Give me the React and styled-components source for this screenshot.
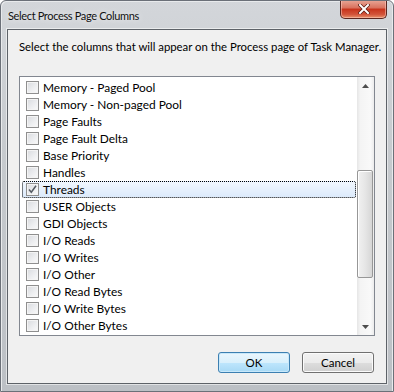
import React from "react";
import styled, { createGlobalStyle } from "styled-components";

const GlobalStyle = createGlobalStyle`
  body {
    margin: 0;
    font-family: Lato, "Noto Sans", sans-serif;
    font-size: 11px;
    color: #000;
  }
`;

const Window = styled.div`
  width: 394px;
  height: 392px;
  box-sizing: border-box;
  display: flex;
  flex-direction: column;
  padding: 0 6px 7px 6px;
  border-radius: 6px 6px 0 0;
  border: 1px solid #6b7078;
  background: linear-gradient(180deg, #d3d6da 0%, #c6cace 40%, #bcc0c5 100%);
  box-shadow: inset 1px 1px 0 #e8eaec, inset -1px 0 0 #e8eaec;
  overflow: hidden;
`;

const TitleBar = styled.div`
  height: 28px;
  display: flex;
  justify-content: space-between;
  align-items: flex-start;
`;

const Title = styled.span`
  margin-top: 8px;
  margin-left: 1px;
  font-size: 11px;
  letter-spacing: -0.35px;
  color: #111;
  text-shadow: 0 0 6px rgba(255, 255, 255, 0.9);
`;

const CloseButton = styled.div`
  width: 47px;
  height: 19px;
  margin-top: -1px;
  box-sizing: border-box;
  border: 1px solid #5b2720;
  border-top: none;
  border-radius: 0 0 5px 5px;
  background: linear-gradient(180deg, #e9a898 0%, #d8705c 45%, #c7321a 50%, #d2543a 80%, #e8926a 100%);
  box-shadow: inset 0 0 0 1px rgba(255, 210, 200, 0.5);
  display: flex;
  align-items: center;
  justify-content: center;
`;

const Client = styled.div`
  flex: 1;
  display: flex;
  flex-direction: column;
  background: #f0f0f0;
  border: 1px solid #5d6268;
  box-shadow: 0 0 0 1px rgba(255, 255, 255, 0.55);
  padding: 0 11px 0 11px;
`;

const Description = styled.div`
  margin-top: 9px;
  line-height: 16px;
  height: 16px;
  font-size: 11.35px;
  white-space: nowrap;
`;

const ListBox = styled.div`
  margin-top: 21px;
  height: 260px;
  box-sizing: border-box;
  border: 1px solid #828790;
  background: #fff;
  display: flex;
`;

const Rows = styled.div`
  flex: 1;
  padding: 2px 1px 0 2px;
  overflow: hidden;
`;

const Row = styled.div`
  height: 17px;
  box-sizing: border-box;
  display: flex;
  align-items: center;
  padding-left: 3px;
  border: 1px ${(p) => (p.$selected ? "dotted #000" : "solid transparent")};
  border-radius: ${(p) => (p.$selected ? "2px" : "0")};
  background: ${(p) =>
    p.$selected ? "linear-gradient(180deg, #f1f7fe 0%, #dceafb 100%)" : "transparent"};
`;

const Check = styled.span`
  width: 13px;
  height: 13px;
  box-sizing: border-box;
  border: 1px solid #8f8f8f;
  background: linear-gradient(135deg, #d8dade 0%, #eeeff1 60%, #fafafa 100%);
  box-shadow: inset 0 0 0 1px #f4f4f4;
  display: flex;
  align-items: center;
  justify-content: center;
  flex-shrink: 0;
`;

const Label = styled.span`
  margin-left: 4px;
  line-height: 15px;
  font-size: 11.9px;
  white-space: nowrap;
`;

const ScrollBar = styled.div`
  width: 17px;
  display: flex;
  flex-direction: column;
  background: linear-gradient(90deg, #e6e6e6 0%, #f4f4f4 20%, #f9f9f9 80%, #ececec 100%);
`;

const Arrow = styled.div`
  height: 17px;
  display: flex;
  align-items: center;
  justify-content: center;
`;

const Track = styled.div`
  flex: 1;
  display: flex;
  flex-direction: column;
  padding-top: ${(p) => p.$before}px;
`;

const Thumb = styled.div`
  height: ${(p) => p.$size}px;
  margin: 0 1px 0 0;
  box-sizing: border-box;
  border: 1px solid #979797;
  border-radius: 2px;
  background: linear-gradient(90deg, #f1f1f1 0%, #e6e6e6 50%, #d6d6d6 100%);
  box-shadow: inset 1px 1px 0 #fff;
`;

const Footer = styled.div`
  display: flex;
  justify-content: flex-end;
  gap: 12px;
  margin-top: 16px;
  padding-right: 1px;
`;

const Button = styled.div`
  width: 72px;
  height: 21px;
  box-sizing: border-box;
  border-radius: 3px;
  display: flex;
  align-items: center;
  justify-content: center;
  font-size: 11.5px;
  border: 1px solid ${(p) => (p.$default ? "#3c7fb1" : "#707070")};
  background: ${(p) =>
    p.$default
      ? "linear-gradient(180deg, #eaf6fd 0%, #d9f0fc 50%, #bee6fd 51%, #a7d9f5 100%)"
      : "linear-gradient(180deg, #f2f2f2 0%, #ebebeb 50%, #dddddd 51%, #cfcfcf 100%)"};
  box-shadow: inset 0 0 0 1px ${(p) => (p.$default ? "#c8e8fa" : "#fbfbfb")};
`;

const items = [
  "Memory - Paged Pool",
  "Memory - Non-paged Pool",
  "Page Faults",
  "Page Fault Delta",
  "Base Priority",
  "Handles",
  "Threads",
  "USER Objects",
  "GDI Objects",
  "I/O Reads",
  "I/O Writes",
  "I/O Other",
  "I/O Read Bytes",
  "I/O Write Bytes",
  "I/O Other Bytes",
];

export default function App() {
  return (
    <>
      <GlobalStyle />
      <Window>
        <TitleBar>
          <Title>Select Process Page Columns</Title>
          <CloseButton>
            <svg width="12" height="10" viewBox="0 0 12 10">
              <path d="M2 1 L10 9 M10 1 L2 9" stroke="#5a1a10" strokeWidth="3.4" strokeLinecap="square" />
              <path d="M2 1 L10 9 M10 1 L2 9" stroke="#fff" strokeWidth="2" strokeLinecap="square" />
            </svg>
          </CloseButton>
        </TitleBar>
        <Client>
          <Description>
            Select the columns that will appear on the Process page of Task Manager.
          </Description>
          <ListBox>
            <Rows>
              {items.map((name) => (
                <Row key={name} $selected={name === "Threads"}>
                  <Check>
                    {name === "Threads" && (
                      <svg width="9" height="9" viewBox="0 0 9 9">
                        <path d="M1 4.5 L3.3 7.2 L8 0.8" fill="none" stroke="#555b63" strokeWidth="1.5" />
                      </svg>
                    )}
                  </Check>
                  <Label>{name}</Label>
                </Row>
              ))}
            </Rows>
            <ScrollBar>
              <Arrow>
                <svg width="7" height="4" viewBox="0 0 7 4">
                  <path d="M0 4 L3.5 0 L7 4 Z" fill="#4d4d4d" />
                </svg>
              </Arrow>
              <Track $before={76}>
                <Thumb $size={108} />
              </Track>
              <Arrow>
                <svg width="7" height="4" viewBox="0 0 7 4">
                  <path d="M0 0 L3.5 4 L7 0 Z" fill="#4d4d4d" />
                </svg>
              </Arrow>
            </ScrollBar>
          </ListBox>
          <Footer>
            <Button $default>OK</Button>
            <Button>Cancel</Button>
          </Footer>
        </Client>
      </Window>
    </>
  );
}
